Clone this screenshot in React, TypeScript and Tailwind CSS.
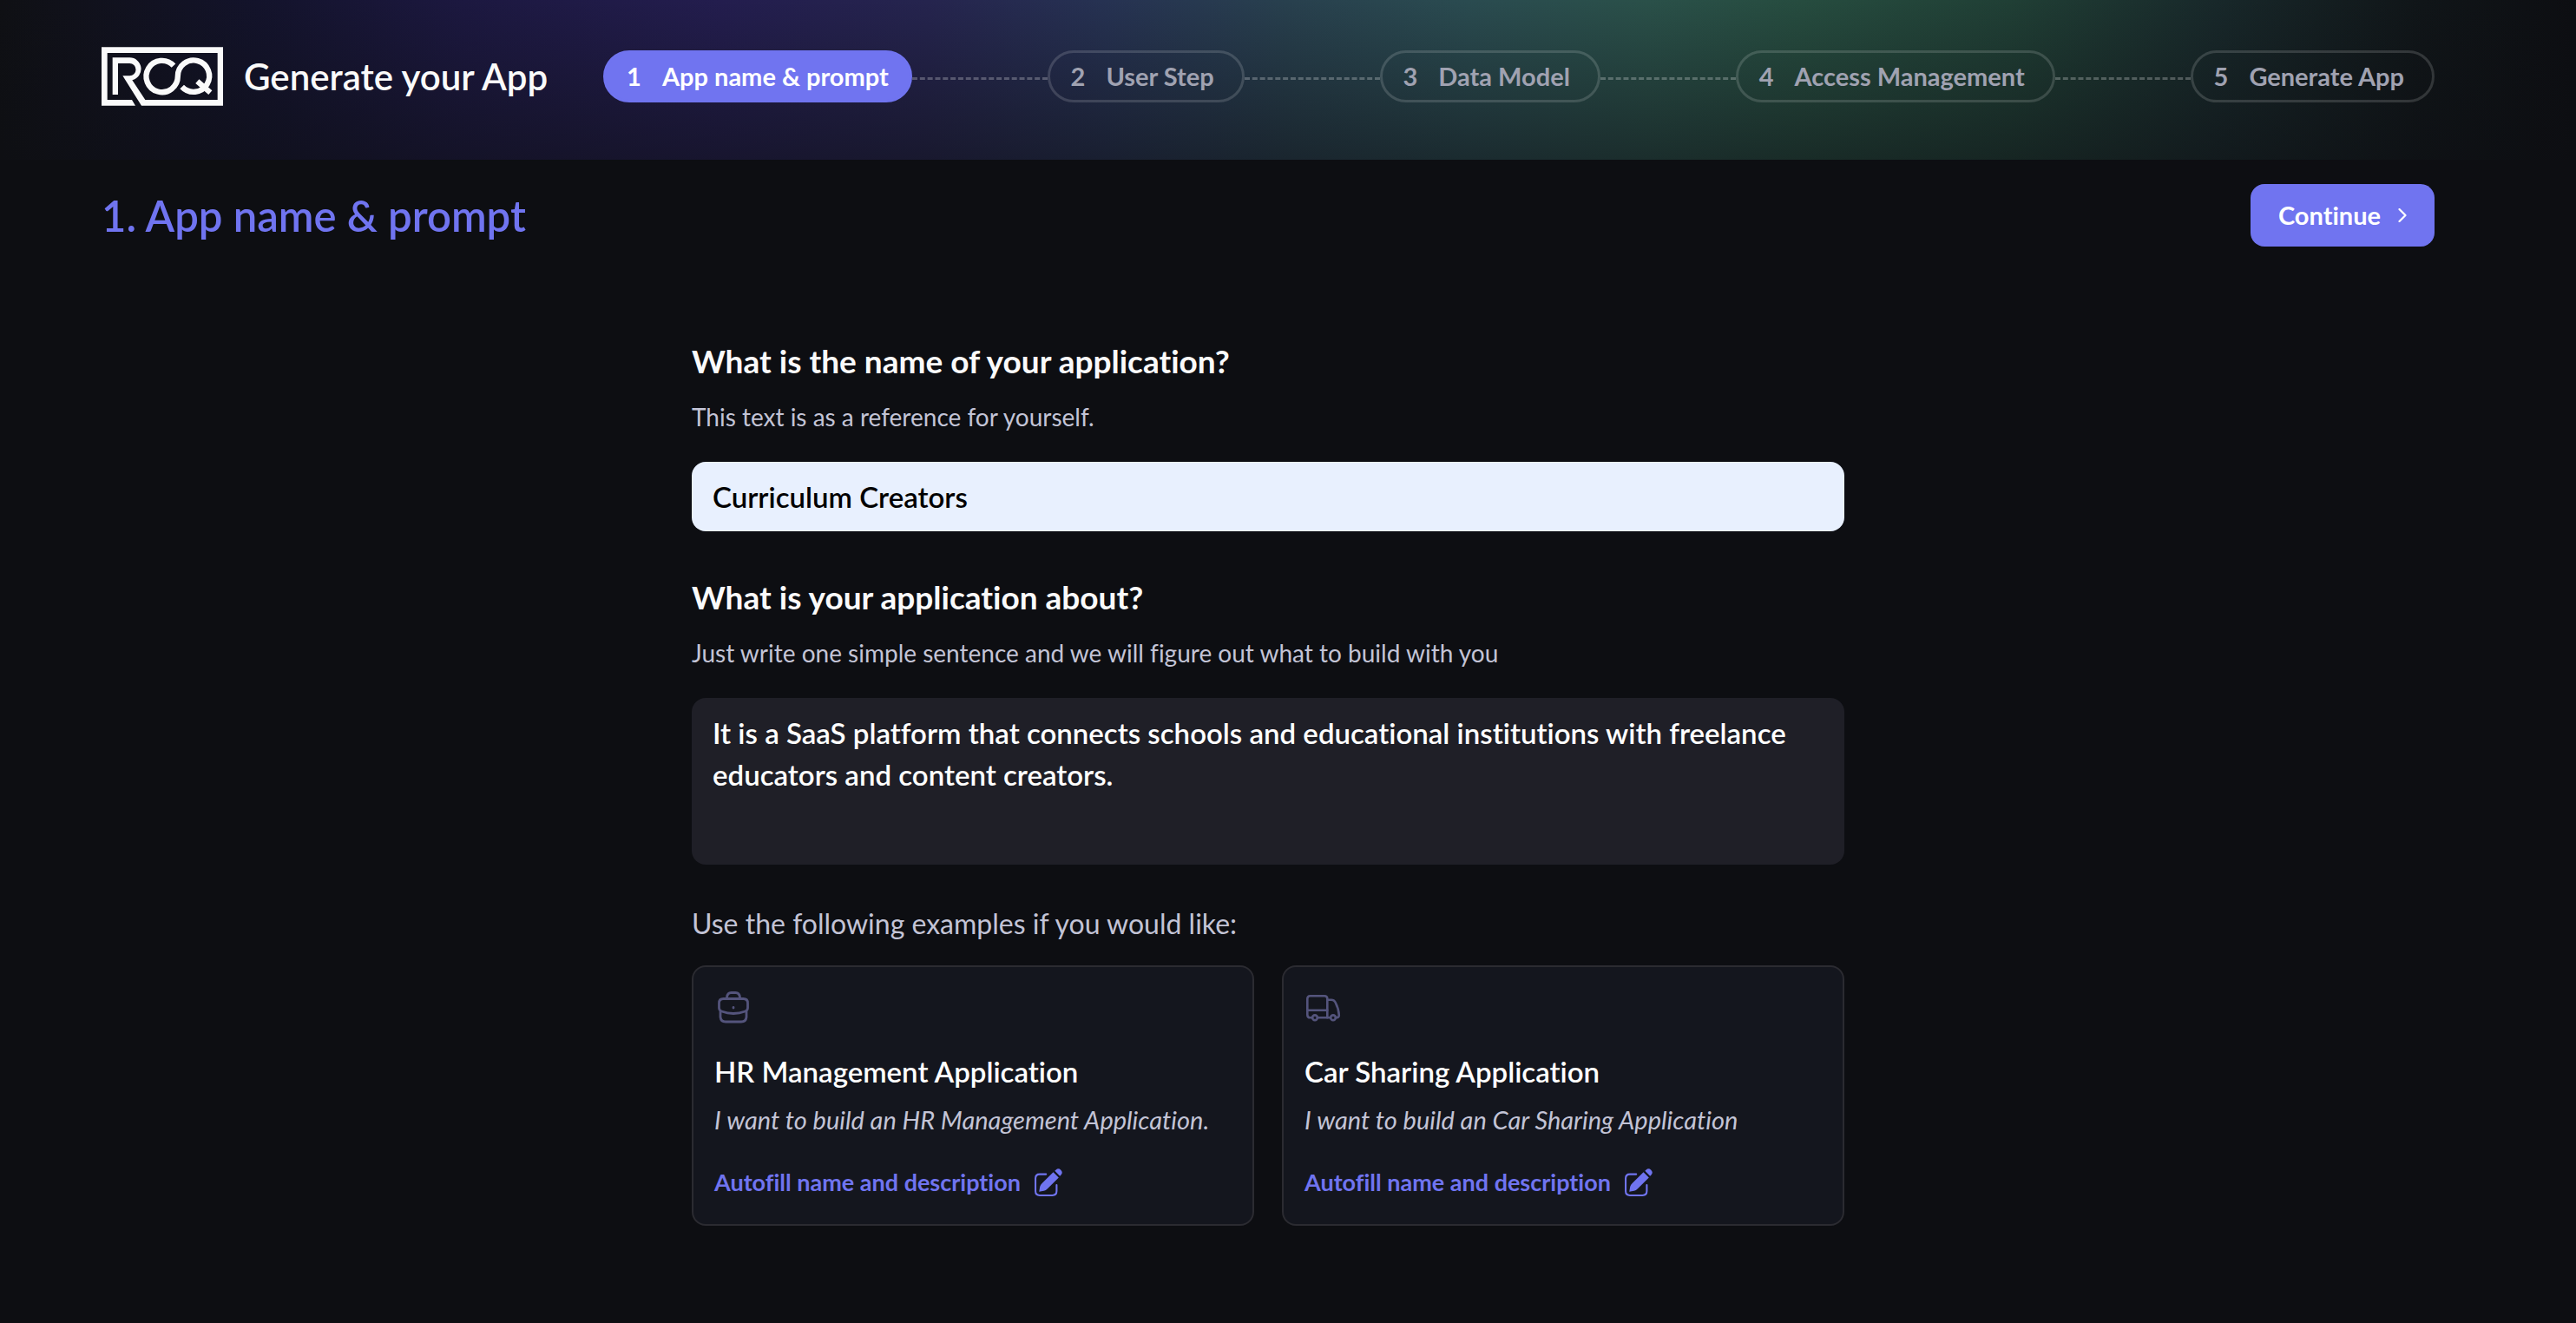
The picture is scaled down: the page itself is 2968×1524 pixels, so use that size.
import { Fragment, useState } from "react";
import type { ReactNode } from "react";

const STEPS = ["App name & prompt", "User Step", "Data Model", "Access Management", "Generate App"];

function Logo() {
  return (
    <svg viewBox="30 31 420 202" className="h-[68px] w-[140px] shrink-0" role="img" aria-label="ROQ">
      <path
        fill="#fafafa"
        d="M450 31V233H168L103 130H127A21.5 21.5 0 0 0 127 87H87V195H68V67H127A39.5 39.5 0 0 1 136 145L181 213H431V51H50V213H135L147 233H30V31Z"
      />
      <path
        fill="none"
        stroke="#fafafa"
        strokeWidth="19"
        d="M279 95A54.5 54.5 0 1 0 293.5 131.5A54.5 54.5 0 1 1 308 168M361 149L406 188"
      />
    </svg>
  );
}

function BriefcaseIcon() {
  return (
    <svg viewBox="0 0 44 44" className="size-11" fill="none" stroke="currentColor" strokeWidth="2.8" strokeLinecap="round" strokeLinejoin="round" aria-hidden="true">
      <path d="M10.5 12.5H33.5Q38.5 12.5 38.5 17.5V23Q38.5 26 35.5 27Q29 29.5 22 29.5T8.5 27Q5.5 26 5.5 23V17.5Q5.5 12.5 10.5 12.5Z" />
      <path d="M7 27.5V33.5Q7.5 39 13 39H31Q36.5 39 37 33.5V27.5" />
      <path d="M14.5 12V11Q15 5.5 19.5 5.5H24.5Q29 5.5 29.5 11V12" />
      <path d="M22 22.5V23" />
    </svg>
  );
}

function TruckIcon() {
  return (
    <svg viewBox="0 0 44 44" className="size-11" fill="none" stroke="currentColor" strokeWidth="2.6" strokeLinecap="round" strokeLinejoin="round" aria-hidden="true">
      <path d="M9 34.3H6.5Q3.3 34.3 3.3 31V12.5Q3.3 9.3 6.5 9.3H23Q26.3 9.3 26.3 12.5V34.3" />
      <path d="M3.3 25.7H26.3M15 34.3H30" />
      <path d="M26.3 13.7H31Q34 13.7 35.5 16.5Q39.5 24 39.8 31.5Q39.9 34.3 36 34.3" />
      <circle cx="12" cy="34.3" r="2.9" />
      <circle cx="33" cy="34.3" r="2.9" />
    </svg>
  );
}

function EditIcon() {
  return (
    <svg viewBox="0 0 92 92" className="size-8" fill="currentColor" aria-hidden="true">
      <path
        fill="none"
        stroke="currentColor"
        strokeWidth="6"
        strokeLinecap="round"
        d="M38 19H17Q3 19 3 33V75Q3 89 17 89H59Q73 89 73 75V55"
      />
      <path d="M15 77L18 60Q20 54 25 49L62 12L80 30L43 67Q37 73 31 74Z" />
      <path d="M67 8L71 4Q79 -3 87 5Q95 13 88 21L84 25Z" />
    </svg>
  );
}

function Header() {
  return (
    <header className="flex items-center bg-[linear-gradient(to_bottom,#0d0e1200,#0d0e1285),linear-gradient(to_right,#0f1014_0%,#13132b_10%,#1c1840_18%,#231d4e_28%,#25244e_36%,#263252_43%,#28404e_50%,#2a4b50_57%,#2a5049_64%,#264c3f_70%,#203f35_78%,#18282a_86%,#101518_94%,#0d0e12_100%)] pt-[54px] pr-[163px] pb-[62px] pl-[117px]">
      <Logo />
      <p className="ml-6 text-[42px] leading-[60px] font-semibold whitespace-nowrap">Generate your App</p>
      <nav aria-label="Steps" className="ml-16 flex flex-1 items-center">
        {STEPS.map((label, i) => (
          <Fragment key={label}>
            {i > 0 && <span className="mt-1 flex-1 border-t-3 border-dashed border-white/25" />}
            <button
              type="button"
              aria-current={i === 0 ? "step" : undefined}
              className={
                i === 0
                  ? "flex h-[60px] items-center gap-6 rounded-full border-3 border-[#7074f0] bg-[#7074f0] px-6 text-[29px] font-bold whitespace-nowrap text-white"
                  : "flex h-[60px] items-center gap-6 rounded-full border-3 border-white/15 pr-8 pl-6 text-[29px] font-bold whitespace-nowrap text-[#a0a2b1]"
              }
            >
              <span>{i + 1}</span>
              <span>{label}</span>
            </button>
          </Fragment>
        ))}
      </nav>
    </header>
  );
}

type ExampleProps = { icon: ReactNode; title: string; prompt: string; onFill: () => void };

function ExampleCard({ icon, title, prompt, onFill }: ExampleProps) {
  return (
    <article className="rounded-2xl border-2 border-[#2b2b31] bg-[#14161e] px-6 pt-6 pb-7">
      <div className="text-[#54547c]">{icon}</div>
      <h3 className="mt-7 text-[33px] leading-[48px] font-semibold text-white">{title}</h3>
      <p className="mt-3 text-[29px] leading-[40px] text-[#c3c4d6] italic">{prompt}</p>
      <button type="button" onClick={onFill} className="mt-8 flex items-center gap-4 text-[27px] leading-[40px] font-bold text-[#7074f0]">
        Autofill name and description
        <EditIcon />
      </button>
    </article>
  );
}

export default function App() {
  const [name, setName] = useState("Curriculum Creators");
  const [about, setAbout] = useState(
    "It is a SaaS platform that connects schools and educational institutions with freelance educators and content creators.",
  );
  const fill = (title: string, prompt: string) => () => {
    setName(title);
    setAbout(prompt);
  };

  return (
    <div className="min-h-screen bg-[#0d0e12] font-['Lato',sans-serif] text-[#fafafa] [font-variant-ligatures:no-common-ligatures]">
      <Header />
      <main className="pt-7 pr-[163px] pb-16 pl-[117px]">
        <div className="flex items-center justify-between">
          <h1 className="text-[49px] leading-[60px] font-semibold text-[#7074f0]">1. App name &amp; prompt</h1>
          <button type="button" className="flex h-[72px] items-center gap-5 rounded-2xl bg-[#7074f0] pr-8 pl-8 text-[29px] font-bold text-white">
            Continue
            <svg viewBox="0 0 10 16" className="h-4 w-[10px]" fill="none" stroke="currentColor" strokeWidth="2.2" strokeLinecap="round" strokeLinejoin="round" aria-hidden="true">
              <path d="M1.5 1L8.5 8L1.5 15" />
            </svg>
          </button>
        </div>

        <form className="mx-auto mt-[108px] max-w-[1328px]" onSubmit={(e) => e.preventDefault()}>
          <label htmlFor="app-name" className="block text-[37px] leading-[48px] font-bold">
            What is the name of your application?
          </label>
          <p className="mt-5 text-[28px] leading-[40px] text-[#c3c4d6]">This text is as a reference for yourself.</p>
          <input
            id="app-name"
            type="text"
            value={name}
            onChange={(e) => setName(e.target.value)}
            className="mt-8 block h-20 w-full rounded-2xl bg-[#e8f0fe] px-6 text-[33px] font-semibold text-black outline-none"
          />

          <label htmlFor="app-about" className="mt-[52px] block text-[37px] leading-[48px] font-bold">
            What is your application about?
          </label>
          <p className="mt-5 text-[28px] leading-[40px] text-[#c3c4d6]">
            Just write one simple sentence and we will figure out what to build with you
          </p>
          <textarea
            id="app-about"
            value={about}
            onChange={(e) => setAbout(e.target.value)}
            className="mt-8 block h-[192px] w-full resize-none rounded-2xl bg-[#1f1f27] px-6 py-4 text-[33px] leading-[48px] font-semibold text-white outline-none"
          />

          <p className="mt-12 text-[32px] leading-[40px] text-[#c3c4d6]">Use the following examples if you would like:</p>
          <div className="mt-7 grid grid-cols-2 gap-8">
            <ExampleCard
              icon={<BriefcaseIcon />}
              title="HR Management Application"
              prompt="I want to build an HR Management Application."
              onFill={fill("HR Management Application", "I want to build an HR Management Application.")}
            />
            <ExampleCard
              icon={<TruckIcon />}
              title="Car Sharing Application"
              prompt="I want to build an Car Sharing Application"
              onFill={fill("Car Sharing Application", "I want to build an Car Sharing Application")}
            />
          </div>
        </form>
      </main>
    </div>
  );
}
